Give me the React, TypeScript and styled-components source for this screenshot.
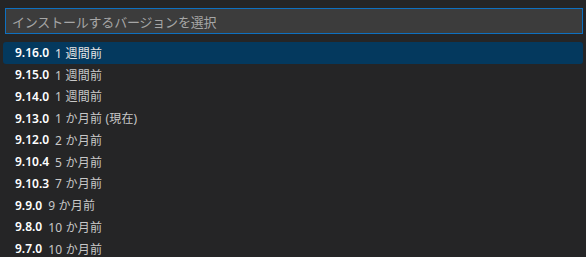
import React from "react";
import styled, { createGlobalStyle } from "styled-components";

const Global = createGlobalStyle`
  html, body { margin: 0; padding: 0; background: #252526; }
  body { font-family: "Segoe UI", "Noto Sans", "Noto Sans CJK JP", sans-serif; }
`;

const Panel = styled.div`
  width: 586px;
  height: 257px;
  background: #252526;
  box-sizing: border-box;
  padding: 8px 3px 0 3px;
  overflow: hidden;
  display: flex;
  flex-direction: column;
`;

const InputWrap = styled.div`
  flex-shrink: 0;
  margin: 0 0 0 2px;
  height: 26px;
  box-sizing: border-box;
  border: 1px solid #0e70c0;
  background: #3c3c3c;
  display: flex;
  align-items: center;
  padding: 0 6px;
`;

const Placeholder = styled.span`
  color: #a6a6a6;
  font-size: 13px;
  font-family: "Noto Sans CJK JP", sans-serif;
  letter-spacing: -0.2px;
`;

const List = styled.div`
  flex-shrink: 0;
  margin-top: 8px;
  display: flex;
  flex-direction: column;
`;

const Row = styled.div<{ $selected?: boolean }>`
  flex-shrink: 0;
  height: 21.75px;
  display: flex;
  align-items: center;
  padding-left: 12px;
  gap: 6px;
  background: ${(p) => (p.$selected ? "#04395e" : "transparent")};
  border-radius: ${(p) => (p.$selected ? "3px" : "0")};
`;

const Version = styled.span`
  color: #ffffff;
  font-weight: 600;
  font-size: 12px;
  font-family: "Noto Sans", sans-serif;
`;

const Desc = styled.span<{ $selected?: boolean }>`
  color: ${(p) => (p.$selected ? "#e6e6e6" : "#c8c8c8")};
  font-size: 12px;
  font-family: "Noto Sans", "Noto Sans CJK JP", sans-serif;
  letter-spacing: 0.2px;
`;

const items = [
  ["9.16.0", "1 週間前"],
  ["9.15.0", "1 週間前"],
  ["9.14.0", "1 週間前"],
  ["9.13.0", "1 か月前 (現在)"],
  ["9.12.0", "2 か月前"],
  ["9.10.4", "5 か月前"],
  ["9.10.3", "7 か月前"],
  ["9.9.0", "9 か月前"],
  ["9.8.0", "10 か月前"],
  ["9.7.0", "10 か月前"],
];

export default function App() {
  return (
    <>
      <Global />
      <Panel>
        <InputWrap>
          <Placeholder>インストールするバージョンを選択</Placeholder>
        </InputWrap>
        <List>
          {items.map(([v, d], i) => (
            <Row key={v} $selected={i === 0}>
              <Version>{v}</Version>
              <Desc $selected={i === 0}>{d}</Desc>
            </Row>
          ))}
        </List>
      </Panel>
    </>
  );
}
